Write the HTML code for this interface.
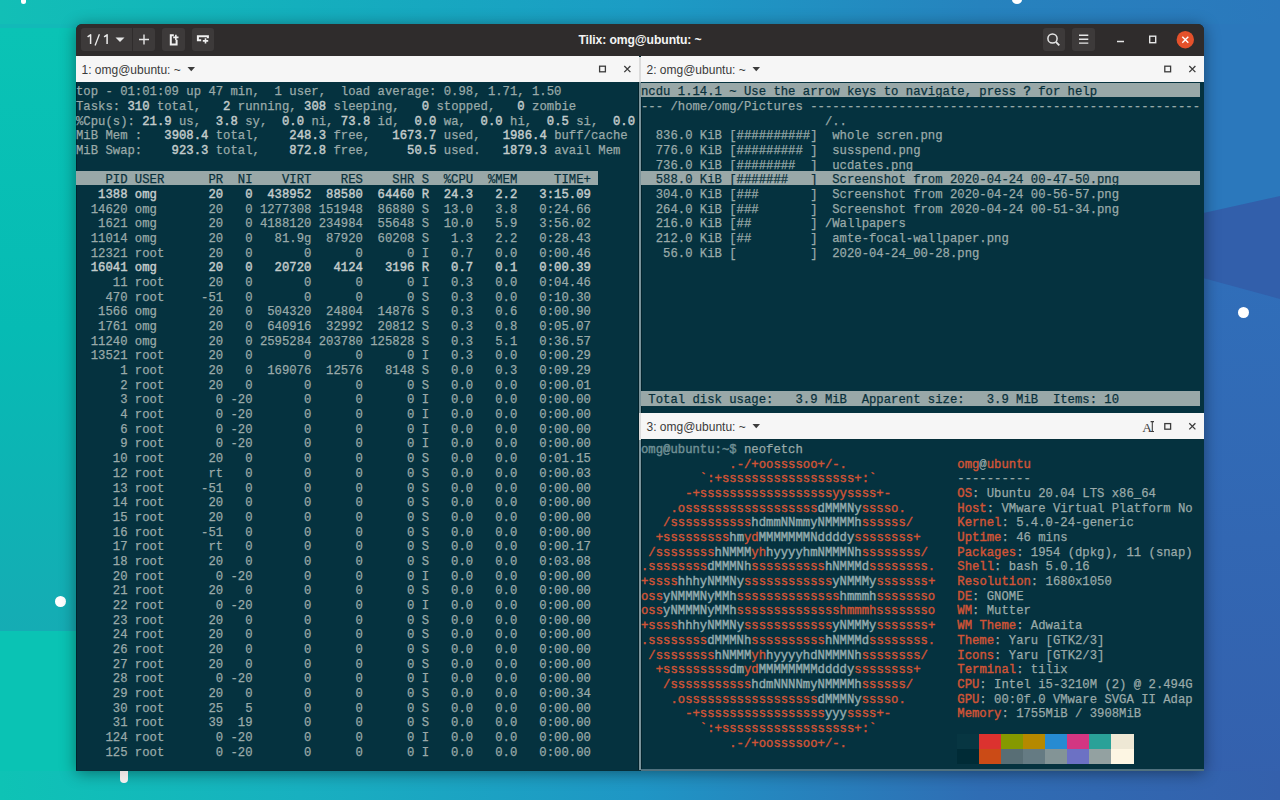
<!DOCTYPE html>
<html><head><meta charset="utf-8">
<style>
html,body{margin:0;padding:0}
body{width:1280px;height:800px;overflow:hidden;position:relative;font-family:"Liberation Sans",sans-serif;
background:linear-gradient(90deg,#0fc2b6 0%,#17b3bb 25%,#1e9fc4 50%,#2a7fc0 80%,#3164b2 100%);}
.abs{position:absolute}

.row{position:absolute;white-space:pre;-webkit-text-stroke:0.25px currentColor;font-family:"Liberation Mono",monospace;font-size:13.0px;transform-origin:0 0;transform:scaleX(0.94281);line-height:14.68px;height:14.68px;color:#9aaaa9}
.bar{position:absolute;background:#99a8a8}
.blk{position:absolute}
.term{position:absolute;background:#05323f}

.win{position:absolute;left:75.5px;top:24px;width:1128.5px;height:747px;border-radius:6px 6px 0 0;overflow:hidden;background:#062f3a;box-shadow:0 2px 16px rgba(0,0,0,.42)}
.hb{position:absolute;left:75.5px;top:24px;width:1128.5px;height:32px;background:#2f2c2c;border-radius:6px 6px 0 0}
.btn{position:absolute;background:#3d3a3a;border-radius:3px}
.tab{position:absolute;background:#f6f6f6;height:26px}
.tabt{position:absolute;font-family:"Liberation Sans",sans-serif;font-size:12px;letter-spacing:0px;color:#3a3a3a;white-space:pre}
.dot{position:absolute;background:#fff;border-radius:50%}
</style></head><body>
<!-- wallpaper facets -->
<svg class="abs" style="left:0;top:0" width="1280" height="800">
  <defs>
    <linearGradient id="gt" x1="0" y1="0" x2="1280" y2="0" gradientUnits="userSpaceOnUse">
      <stop offset="0" stop-color="#12bfb6"/><stop offset="0.234" stop-color="#14afbd"/><stop offset="0.5" stop-color="#1c9cc5"/><stop offset="0.766" stop-color="#2683be"/><stop offset="1" stop-color="#2b78bc"/>
    </linearGradient>
    <linearGradient id="gb" x1="0" y1="0" x2="1280" y2="0" gradientUnits="userSpaceOnUse">
      <stop offset="0" stop-color="#0ec3b5"/><stop offset="0.234" stop-color="#18b0c0"/><stop offset="0.5" stop-color="#1f96c5"/><stop offset="0.766" stop-color="#2f6db4"/><stop offset="1" stop-color="#3460ac"/>
    </linearGradient>
    <linearGradient id="gl" x1="0" y1="28" x2="0" y2="631" gradientUnits="userSpaceOnUse">
      <stop offset="0" stop-color="#0ac3b5"/><stop offset="0.5" stop-color="#06bbb4"/><stop offset="1" stop-color="#15acb4"/>
    </linearGradient>
    <linearGradient id="gr" x1="0" y1="280" x2="0" y2="800" gradientUnits="userSpaceOnUse">
      <stop offset="0" stop-color="#306eb9"/><stop offset="1" stop-color="#3460ad"/>
    </linearGradient>
  </defs>
  <rect x="0" y="0" width="1280" height="400" fill="url(#gt)"/>
  <rect x="0" y="400" width="1280" height="400" fill="url(#gb)"/>
  <rect x="0" y="0" width="200" height="631" fill="url(#gl)"/>
  <rect x="0" y="0" width="200" height="28" fill="#12b9b8"/>
  <rect x="0" y="631" width="200" height="169" fill="#0ac3b4"/>
  <rect x="1100" y="0" width="180" height="260" fill="#2b78bc"/>
  <rect x="1100" y="260" width="180" height="540" fill="url(#gr)"/>
  <polygon points="1100,236 1280,196 1280,299 1100,250" fill="#325fab"/>
  <rect x="0" y="771" width="1280" height="29" fill="url(#gb)"/>
  <rect x="0" y="0" width="1280" height="24" fill="url(#gt)"/>
</svg>
<div class="dot" style="left:54.5px;top:596.2px;width:11px;height:11px"></div>
<div class="dot" style="left:1238.2px;top:306.5px;width:11px;height:11px"></div>
<div class="dot" style="left:1012px;top:-4px;width:10px;height:8px"></div>
<div class="abs" style="left:21px;top:-3px;width:5px;height:7px;background:#fff;border-radius:3px"></div>

<div class="win"></div>
<div class="hb"></div>
<!-- header buttons -->
<div class="btn" style="left:81px;top:28px;width:50.5px;height:23px;border-radius:3px 0 0 3px"></div>
<div class="btn" style="left:132.5px;top:28px;width:22.5px;height:23px;border-radius:0 3px 3px 0"></div>
<div class="btn" style="left:162px;top:28px;width:23px;height:23px"></div>
<div class="btn" style="left:191.5px;top:28px;width:22.5px;height:23px"></div>
<div class="btn" style="left:1043px;top:28px;width:22px;height:23px"></div>
<div class="btn" style="left:1072px;top:28px;width:22.5px;height:23px"></div>

<svg class="abs" style="left:0;top:0" width="1280" height="80">
  <polygon points="115.5,37.5 124.5,37.5 120,42" fill="#e6e6e6"/>
  <path d="M87.6 36.9L90.6 34.8V43.9M104.1 36.9L107.1 34.8V43.9" stroke="#ececec" stroke-width="1.5" fill="none" stroke-linejoin="round"/>
  <path d="M99.4 34.2L95.1 45.6" stroke="#ececec" stroke-width="1.3"/>
  <path d="M139 39.5h10M144 34.5v10" stroke="#e6e6e6" stroke-width="1.4"/>
  <!-- split right icon -->
  <path d="M173.8 35.2H170.8V44.4H176.6V39.8" stroke="#f0f0f0" stroke-width="2" fill="none"/>
  <path d="M173.2 37.4H178.5M175.85 34.8V40" stroke="#f0f0f0" stroke-width="1.6" fill="none"/>
  <!-- split down icon -->
  <path d="M201.2 40.2H197.9V36.2H207.9V38.3" stroke="#f0f0f0" stroke-width="2" fill="none"/>
  <path d="M202.8 40.9H208.2M205.5 38.2V43.6" stroke="#f0f0f0" stroke-width="1.6" fill="none"/>
  <!-- search -->
  <circle cx="1052.5" cy="38.5" r="4.6" stroke="#e6e6e6" stroke-width="1.5" fill="none"/>
  <path d="M1056 42l3.3 3.3" stroke="#e6e6e6" stroke-width="1.8"/>
  <!-- menu -->
  <path d="M1079 35.3h9.3M1079 39.2h9.3M1079 43.1h9.3" stroke="#e6e6e6" stroke-width="1.4"/>
  <!-- min max close -->
  <path d="M1117 41.5h7" stroke="#e6e6e6" stroke-width="1.5"/>
  <rect x="1149.7" y="36.2" width="6" height="6.5" stroke="#e6e6e6" stroke-width="1.4" fill="none"/>
  <circle cx="1185.3" cy="39.7" r="8.7" fill="#e5512b"/>
  <path d="M1182.3 36.7l6 6M1188.3 36.7l-6 6" stroke="#fff" stroke-width="1.4"/>
</svg>
<div class="abs" style="left:578.5px;top:32.5px;font-size:12.2px;font-weight:bold;letter-spacing:-0.1px;color:#f4f4f4;white-space:pre">Tilix: omg@ubuntu: ~</div>

<!-- terminals -->
<div class="term" style="left:75.5px;top:82px;width:563.5px;height:688px"></div>
<div class="term" style="left:640.75px;top:82px;width:563.25px;height:331px"></div>
<div class="term" style="left:640.75px;top:439.5px;width:563.25px;height:330.5px"></div>
<div class="abs" style="left:638px;top:82px;width:1px;height:688px;background:#01222b"></div><div class="abs" style="left:639px;top:82px;width:2.25px;height:688px;background:#7b949b"></div><div class="abs" style="left:639px;top:56.5px;width:2px;height:25.5px;background:#dcdcdc"></div><div class="abs" style="left:639px;top:413px;width:2px;height:26.5px;background:#dcdcdc"></div><div class="abs" style="left:641.25px;top:82px;width:0.75px;height:688px;background:#01222b"></div>

<!-- tab bars -->
<div class="tab" style="left:75.5px;top:56px;width:563.5px"></div>
<div class="tab" style="left:640.75px;top:56px;width:563.25px"></div>
<div class="tab" style="left:640.75px;top:413px;width:563.25px"></div>
<div class="tabt" style="left:81.5px;top:62.8px">1: omg@ubuntu: ~</div>
<div class="tabt" style="left:646.5px;top:62.8px">2: omg@ubuntu: ~</div>
<div class="tabt" style="left:646.5px;top:419.8px">3: omg@ubuntu: ~</div>
<svg class="abs" style="left:0;top:0" width="1280" height="800">
  <polygon points="187.5,67 195,67 191.25,71.3" fill="#3c3c3c"/>
  <polygon points="752.5,67 760,67 756.25,71.3" fill="#3c3c3c"/>
  <polygon points="752.5,424 760,424 756.25,428.3" fill="#3c3c3c"/>
  <rect x="599.6" y="66.2" width="5.8" height="5.6" stroke="#3c3c3c" stroke-width="1.3" fill="none"/>
  <path d="M624.3 66l6.1 6.1M630.4 66l-6.1 6.1" stroke="#3c3c3c" stroke-width="1.3"/>
  <rect x="1164.8" y="66.2" width="5.8" height="5.6" stroke="#3c3c3c" stroke-width="1.3" fill="none"/>
  <path d="M1189.3 66l6.1 6.1M1195.4 66l-6.1 6.1" stroke="#3c3c3c" stroke-width="1.3"/>
  <rect x="1164.8" y="423.6" width="5.8" height="5.6" stroke="#3c3c3c" stroke-width="1.3" fill="none"/>
  <path d="M1189.3 423.3l6.1 6.1M1195.4 423.3l-6.1 6.1" stroke="#3c3c3c" stroke-width="1.3"/>
</svg>
<div class="abs" style="left:1142.3px;top:419.5px;font-family:'Liberation Serif',serif;font-size:13.5px;color:#3c3c3c;letter-spacing:0">A</div>
<svg class="abs" style="left:0;top:0" width="1280" height="800">
  <path d="M1150.6 421.6h3.4M1152.3 421.6v9.9M1150.6 431.5h3.4" stroke="#3c3c3c" stroke-width="1.1" fill="none"/>
</svg>

<div class="abs" style="left:75.5px;top:82px;width:1.2px;height:688px;background:#01242d"></div>
<div class="abs" style="left:641px;top:769.2px;width:563px;height:1.6px;background:#50717e"></div>
<div class="bar" style="left:75.60px;top:170.73px;width:522.21px;height:14.68px"></div>
<div class="bar" style="left:640.75px;top:82.65px;width:558.98px;height:14.68px"></div>
<div class="bar" style="left:640.75px;top:170.73px;width:558.98px;height:14.68px"></div>
<div class="bar" style="left:640.75px;top:390.93px;width:558.98px;height:14.68px"></div>
<div class="blk" style="left:957.02px;top:734.10px;width:22.37px;height:14.98px;background:#073642"></div>
<div class="blk" style="left:979.08px;top:734.10px;width:22.37px;height:14.98px;background:#dc322f"></div>
<div class="blk" style="left:1001.14px;top:734.10px;width:22.37px;height:14.98px;background:#859900"></div>
<div class="blk" style="left:1023.21px;top:734.10px;width:22.37px;height:14.98px;background:#b58900"></div>
<div class="blk" style="left:1045.28px;top:734.10px;width:22.37px;height:14.98px;background:#268bd2"></div>
<div class="blk" style="left:1067.34px;top:734.10px;width:22.37px;height:14.98px;background:#d33682"></div>
<div class="blk" style="left:1089.40px;top:734.10px;width:22.37px;height:14.98px;background:#2aa198"></div>
<div class="blk" style="left:1111.47px;top:734.10px;width:22.37px;height:14.98px;background:#eee8d5"></div>
<div class="blk" style="left:957.02px;top:748.78px;width:22.37px;height:14.98px;background:#002b36"></div>
<div class="blk" style="left:979.08px;top:748.78px;width:22.37px;height:14.98px;background:#cb4b16"></div>
<div class="blk" style="left:1001.14px;top:748.78px;width:22.37px;height:14.98px;background:#586e75"></div>
<div class="blk" style="left:1023.21px;top:748.78px;width:22.37px;height:14.98px;background:#657b83"></div>
<div class="blk" style="left:1045.28px;top:748.78px;width:22.37px;height:14.98px;background:#839496"></div>
<div class="blk" style="left:1067.34px;top:748.78px;width:22.37px;height:14.98px;background:#6c71c4"></div>
<div class="blk" style="left:1089.40px;top:748.78px;width:22.37px;height:14.98px;background:#93a1a1"></div>
<div class="blk" style="left:1111.47px;top:748.78px;width:22.37px;height:14.98px;background:#fdf6e3"></div>
<div class="row" style="left:75.60px;top:85.15px">top - 01:01:09 up 47 min,  1 user,  load average: 0.98, 1.71, 1.50</div>
<div class="row" style="left:75.60px;top:99.83px">Tasks: <span style="color:#c3cccc;-webkit-text-stroke:0.45px currentColor">310</span> total,   <span style="color:#c3cccc;-webkit-text-stroke:0.45px currentColor">2</span> running, <span style="color:#c3cccc;-webkit-text-stroke:0.45px currentColor">308</span> sleeping,   <span style="color:#c3cccc;-webkit-text-stroke:0.45px currentColor">0</span> stopped,   <span style="color:#c3cccc;-webkit-text-stroke:0.45px currentColor">0</span> zombie</div>
<div class="row" style="left:75.60px;top:114.51px">%Cpu(s): <span style="color:#c3cccc;-webkit-text-stroke:0.45px currentColor">21.9</span> us,  <span style="color:#c3cccc;-webkit-text-stroke:0.45px currentColor">3.8</span> sy,  <span style="color:#c3cccc;-webkit-text-stroke:0.45px currentColor">0.0</span> ni, <span style="color:#c3cccc;-webkit-text-stroke:0.45px currentColor">73.8</span> id,  <span style="color:#c3cccc;-webkit-text-stroke:0.45px currentColor">0.0</span> wa,  <span style="color:#c3cccc;-webkit-text-stroke:0.45px currentColor">0.0</span> hi,  <span style="color:#c3cccc;-webkit-text-stroke:0.45px currentColor">0.5</span> si,  <span style="color:#c3cccc;-webkit-text-stroke:0.45px currentColor">0.0</span></div>
<div class="row" style="left:75.60px;top:129.19px">MiB Mem :   <span style="color:#c3cccc;-webkit-text-stroke:0.45px currentColor">3908.4</span> total,    <span style="color:#c3cccc;-webkit-text-stroke:0.45px currentColor">248.3</span> free,   <span style="color:#c3cccc;-webkit-text-stroke:0.45px currentColor">1673.7</span> used,   <span style="color:#c3cccc;-webkit-text-stroke:0.45px currentColor">1986.4</span> buff/cache</div>
<div class="row" style="left:75.60px;top:143.87px">MiB Swap:    <span style="color:#c3cccc;-webkit-text-stroke:0.45px currentColor">923.3</span> total,    <span style="color:#c3cccc;-webkit-text-stroke:0.45px currentColor">872.8</span> free,     <span style="color:#c3cccc;-webkit-text-stroke:0.45px currentColor">50.5</span> used.   <span style="color:#c3cccc;-webkit-text-stroke:0.45px currentColor">1879.3</span> avail Mem</div>
<div class="row" style="left:75.60px;top:173.23px"><span style="color:#08303b">    PID USER      PR  NI    VIRT    RES    SHR S  %CPU  %MEM     TIME+ </span></div>
<div class="row" style="left:75.60px;top:187.91px"><span style="color:#c3cccc;-webkit-text-stroke:0.45px currentColor">   1388 omg       20   0  438952  88580  64460 R  24.3   2.2   3:15.09</span></div>
<div class="row" style="left:75.60px;top:202.59px">  14620 omg       20   0 1277308 151948  86880 S  13.0   3.8   0:24.66</div>
<div class="row" style="left:75.60px;top:217.27px">   1621 omg       20   0 4188120 234984  55648 S  10.0   5.9   3:56.02</div>
<div class="row" style="left:75.60px;top:231.95px">  11014 omg       20   0   81.9g  87920  60208 S   1.3   2.2   0:28.43</div>
<div class="row" style="left:75.60px;top:246.63px">  12321 root      20   0       0      0      0 I   0.7   0.0   0:00.46</div>
<div class="row" style="left:75.60px;top:261.31px"><span style="color:#c3cccc;-webkit-text-stroke:0.45px currentColor">  16041 omg       20   0   20720   4124   3196 R   0.7   0.1   0:00.39</span></div>
<div class="row" style="left:75.60px;top:275.99px">     11 root      20   0       0      0      0 I   0.3   0.0   0:04.46</div>
<div class="row" style="left:75.60px;top:290.67px">    470 root     -51   0       0      0      0 S   0.3   0.0   0:10.30</div>
<div class="row" style="left:75.60px;top:305.35px">   1566 omg       20   0  504320  24804  14876 S   0.3   0.6   0:00.90</div>
<div class="row" style="left:75.60px;top:320.03px">   1761 omg       20   0  640916  32992  20812 S   0.3   0.8   0:05.07</div>
<div class="row" style="left:75.60px;top:334.71px">  11240 omg       20   0 2595284 203780 125828 S   0.3   5.1   0:36.57</div>
<div class="row" style="left:75.60px;top:349.39px">  13521 root      20   0       0      0      0 I   0.3   0.0   0:00.29</div>
<div class="row" style="left:75.60px;top:364.07px">      1 root      20   0  169076  12576   8148 S   0.0   0.3   0:09.29</div>
<div class="row" style="left:75.60px;top:378.75px">      2 root      20   0       0      0      0 S   0.0   0.0   0:00.01</div>
<div class="row" style="left:75.60px;top:393.43px">      3 root       0 -20       0      0      0 I   0.0   0.0   0:00.00</div>
<div class="row" style="left:75.60px;top:408.11px">      4 root       0 -20       0      0      0 I   0.0   0.0   0:00.00</div>
<div class="row" style="left:75.60px;top:422.79px">      6 root       0 -20       0      0      0 I   0.0   0.0   0:00.00</div>
<div class="row" style="left:75.60px;top:437.47px">      9 root       0 -20       0      0      0 I   0.0   0.0   0:00.00</div>
<div class="row" style="left:75.60px;top:452.15px">     10 root      20   0       0      0      0 S   0.0   0.0   0:01.15</div>
<div class="row" style="left:75.60px;top:466.83px">     12 root      rt   0       0      0      0 S   0.0   0.0   0:00.03</div>
<div class="row" style="left:75.60px;top:481.51px">     13 root     -51   0       0      0      0 S   0.0   0.0   0:00.00</div>
<div class="row" style="left:75.60px;top:496.19px">     14 root      20   0       0      0      0 S   0.0   0.0   0:00.00</div>
<div class="row" style="left:75.60px;top:510.87px">     15 root      20   0       0      0      0 S   0.0   0.0   0:00.00</div>
<div class="row" style="left:75.60px;top:525.55px">     16 root     -51   0       0      0      0 S   0.0   0.0   0:00.00</div>
<div class="row" style="left:75.60px;top:540.23px">     17 root      rt   0       0      0      0 S   0.0   0.0   0:00.17</div>
<div class="row" style="left:75.60px;top:554.91px">     18 root      20   0       0      0      0 S   0.0   0.0   0:03.08</div>
<div class="row" style="left:75.60px;top:569.59px">     20 root       0 -20       0      0      0 I   0.0   0.0   0:00.00</div>
<div class="row" style="left:75.60px;top:584.27px">     21 root      20   0       0      0      0 S   0.0   0.0   0:00.00</div>
<div class="row" style="left:75.60px;top:598.95px">     22 root       0 -20       0      0      0 I   0.0   0.0   0:00.00</div>
<div class="row" style="left:75.60px;top:613.63px">     23 root      20   0       0      0      0 S   0.0   0.0   0:00.00</div>
<div class="row" style="left:75.60px;top:628.31px">     24 root      20   0       0      0      0 S   0.0   0.0   0:00.00</div>
<div class="row" style="left:75.60px;top:642.99px">     26 root      20   0       0      0      0 S   0.0   0.0   0:00.00</div>
<div class="row" style="left:75.60px;top:657.67px">     27 root      20   0       0      0      0 S   0.0   0.0   0:00.00</div>
<div class="row" style="left:75.60px;top:672.35px">     28 root       0 -20       0      0      0 I   0.0   0.0   0:00.00</div>
<div class="row" style="left:75.60px;top:687.03px">     29 root      20   0       0      0      0 S   0.0   0.0   0:00.34</div>
<div class="row" style="left:75.60px;top:701.71px">     30 root      25   5       0      0      0 S   0.0   0.0   0:00.00</div>
<div class="row" style="left:75.60px;top:716.39px">     31 root      39  19       0      0      0 S   0.0   0.0   0:00.00</div>
<div class="row" style="left:75.60px;top:731.07px">    124 root       0 -20       0      0      0 I   0.0   0.0   0:00.00</div>
<div class="row" style="left:75.60px;top:745.75px">    125 root       0 -20       0      0      0 I   0.0   0.0   0:00.00</div>
<div class="row" style="left:640.75px;top:85.15px"><span style="color:#08303b">ncdu 1.14.1 ~ Use the arrow keys to navigate, press </span><span style="color:#08303b;-webkit-text-stroke:0.45px currentColor">?</span><span style="color:#08303b"> for help</span></div>
<div class="row" style="left:640.75px;top:99.83px">--- /home/omg/Pictures -----------------------------------------------------</div>
<div class="row" style="left:640.75px;top:114.51px">                         /..</div>
<div class="row" style="left:640.75px;top:129.19px">  836.0 KiB [##########]  whole scren.png</div>
<div class="row" style="left:640.75px;top:143.87px">  776.0 KiB [######### ]  susspend.png</div>
<div class="row" style="left:640.75px;top:158.55px">  736.0 KiB [########  ]  ucdates.png</div>
<div class="row" style="left:640.75px;top:173.23px"><span style="color:#08303b">  588.0 KiB [#######   ]  Screenshot from 2020-04-24 00-47-50.png</span></div>
<div class="row" style="left:640.75px;top:187.91px">  304.0 KiB [###       ]  Screenshot from 2020-04-24 00-56-57.png</div>
<div class="row" style="left:640.75px;top:202.59px">  264.0 KiB [###       ]  Screenshot from 2020-04-24 00-51-34.png</div>
<div class="row" style="left:640.75px;top:217.27px">  216.0 KiB [##        ] /Wallpapers</div>
<div class="row" style="left:640.75px;top:231.95px">  212.0 KiB [##        ]  amte-focal-wallpaper.png</div>
<div class="row" style="left:640.75px;top:246.63px">   56.0 KiB [          ]  2020-04-24_00-28.png</div>
<div class="row" style="left:640.75px;top:393.43px"><span style="color:#08303b"> Total disk usage:   3.9 MiB  Apparent size:   3.9 MiB  Items: 10</span></div>
<div class="row" style="left:640.75px;top:443.00px"><span style="color:#6f8f94;-webkit-text-stroke:0.45px currentColor">omg@ubuntu:~$</span> neofetch</div>
<div class="row" style="left:640.75px;top:457.68px"><span style="color:#cf5436;-webkit-text-stroke:0.45px currentColor">            </span><span style="color:#cf5436;-webkit-text-stroke:0.45px currentColor">.-/+oossssoo+/-.</span>               <span style="color:#cf5436;-webkit-text-stroke:0.45px currentColor">omg</span><span style="color:#9aaaa9">@</span><span style="color:#cf5436;-webkit-text-stroke:0.45px currentColor">ubuntu</span></div>
<div class="row" style="left:640.75px;top:472.36px"><span style="color:#cf5436;-webkit-text-stroke:0.45px currentColor">        `:+ssssssssssssssssss+:`</span>           <span style="color:#9aaaa9">----------</span></div>
<div class="row" style="left:640.75px;top:487.04px"><span style="color:#cf5436;-webkit-text-stroke:0.45px currentColor">      -+ssssssssssssssssssyyssss+-</span>         <span style="color:#cf5436;-webkit-text-stroke:0.45px currentColor">OS</span><span style="color:#9aaaa9">: Ubuntu 20.04 LTS x86_64</span></div>
<div class="row" style="left:640.75px;top:501.72px"><span style="color:#cf5436;-webkit-text-stroke:0.45px currentColor">    .ossssssssssssssssss</span><span style="color:#93abae;-webkit-text-stroke:0.45px currentColor">dMMMNy</span><span style="color:#cf5436;-webkit-text-stroke:0.45px currentColor">sssso.</span>       <span style="color:#cf5436;-webkit-text-stroke:0.45px currentColor">Host</span><span style="color:#9aaaa9">: VMware Virtual Platform No</span></div>
<div class="row" style="left:640.75px;top:516.40px"><span style="color:#cf5436;-webkit-text-stroke:0.45px currentColor">   /sssssssssss</span><span style="color:#93abae;-webkit-text-stroke:0.45px currentColor">hdmmNNmmyNMMMMh</span><span style="color:#cf5436;-webkit-text-stroke:0.45px currentColor">ssssss/</span>      <span style="color:#cf5436;-webkit-text-stroke:0.45px currentColor">Kernel</span><span style="color:#9aaaa9">: 5.4.0-24-generic</span></div>
<div class="row" style="left:640.75px;top:531.08px"><span style="color:#cf5436;-webkit-text-stroke:0.45px currentColor">  +sssssssss</span><span style="color:#93abae;-webkit-text-stroke:0.45px currentColor">hm</span><span style="color:#cf5436;-webkit-text-stroke:0.45px currentColor">yd</span><span style="color:#93abae;-webkit-text-stroke:0.45px currentColor">MMMMMMMNddddy</span><span style="color:#cf5436;-webkit-text-stroke:0.45px currentColor">ssssssss+</span>     <span style="color:#cf5436;-webkit-text-stroke:0.45px currentColor">Uptime</span><span style="color:#9aaaa9">: 46 mins</span></div>
<div class="row" style="left:640.75px;top:545.76px"><span style="color:#cf5436;-webkit-text-stroke:0.45px currentColor"> /ssssssss</span><span style="color:#93abae;-webkit-text-stroke:0.45px currentColor">hNMMM</span><span style="color:#cf5436;-webkit-text-stroke:0.45px currentColor">yh</span><span style="color:#93abae;-webkit-text-stroke:0.45px currentColor">hyyyyhmNMMMNh</span><span style="color:#cf5436;-webkit-text-stroke:0.45px currentColor">ssssssss/</span>    <span style="color:#cf5436;-webkit-text-stroke:0.45px currentColor">Packages</span><span style="color:#9aaaa9">: 1954 (dpkg), 11 (snap)</span></div>
<div class="row" style="left:640.75px;top:560.44px"><span style="color:#cf5436;-webkit-text-stroke:0.45px currentColor">.ssssssss</span><span style="color:#93abae;-webkit-text-stroke:0.45px currentColor">dMMMNh</span><span style="color:#cf5436;-webkit-text-stroke:0.45px currentColor">ssssssssss</span><span style="color:#93abae;-webkit-text-stroke:0.45px currentColor">hNMMMd</span><span style="color:#cf5436;-webkit-text-stroke:0.45px currentColor">ssssssss.</span>   <span style="color:#cf5436;-webkit-text-stroke:0.45px currentColor">Shell</span><span style="color:#9aaaa9">: bash 5.0.16</span></div>
<div class="row" style="left:640.75px;top:575.12px"><span style="color:#cf5436;-webkit-text-stroke:0.45px currentColor">+ssss</span><span style="color:#93abae;-webkit-text-stroke:0.45px currentColor">hhhyNMMNy</span><span style="color:#cf5436;-webkit-text-stroke:0.45px currentColor">ssssssssssss</span><span style="color:#93abae;-webkit-text-stroke:0.45px currentColor">yNMMMy</span><span style="color:#cf5436;-webkit-text-stroke:0.45px currentColor">sssssss+</span>   <span style="color:#cf5436;-webkit-text-stroke:0.45px currentColor">Resolution</span><span style="color:#9aaaa9">: 1680x1050</span></div>
<div class="row" style="left:640.75px;top:589.80px"><span style="color:#cf5436;-webkit-text-stroke:0.45px currentColor">oss</span><span style="color:#93abae;-webkit-text-stroke:0.45px currentColor">yNMMMNyMMh</span><span style="color:#cf5436;-webkit-text-stroke:0.45px currentColor">ssssssssssssss</span><span style="color:#93abae;-webkit-text-stroke:0.45px currentColor">hmmmh</span><span style="color:#cf5436;-webkit-text-stroke:0.45px currentColor">ssssssso</span>   <span style="color:#cf5436;-webkit-text-stroke:0.45px currentColor">DE</span><span style="color:#9aaaa9">: GNOME</span></div>
<div class="row" style="left:640.75px;top:604.48px"><span style="color:#cf5436;-webkit-text-stroke:0.45px currentColor">oss</span><span style="color:#93abae;-webkit-text-stroke:0.45px currentColor">yNMMMNyMMh</span><span style="color:#cf5436;-webkit-text-stroke:0.45px currentColor">sssssssssssssshmmmhssssssso</span>   <span style="color:#cf5436;-webkit-text-stroke:0.45px currentColor">WM</span><span style="color:#9aaaa9">: Mutter</span></div>
<div class="row" style="left:640.75px;top:619.16px"><span style="color:#cf5436;-webkit-text-stroke:0.45px currentColor">+ssss</span><span style="color:#93abae;-webkit-text-stroke:0.45px currentColor">hhhyNMMNy</span><span style="color:#cf5436;-webkit-text-stroke:0.45px currentColor">ssssssssssss</span><span style="color:#93abae;-webkit-text-stroke:0.45px currentColor">yNMMMy</span><span style="color:#cf5436;-webkit-text-stroke:0.45px currentColor">sssssss+</span>   <span style="color:#cf5436;-webkit-text-stroke:0.45px currentColor">WM Theme</span><span style="color:#9aaaa9">: Adwaita</span></div>
<div class="row" style="left:640.75px;top:633.84px"><span style="color:#cf5436;-webkit-text-stroke:0.45px currentColor">.ssssssss</span><span style="color:#93abae;-webkit-text-stroke:0.45px currentColor">dMMMNh</span><span style="color:#cf5436;-webkit-text-stroke:0.45px currentColor">ssssssssss</span><span style="color:#93abae;-webkit-text-stroke:0.45px currentColor">hNMMMd</span><span style="color:#cf5436;-webkit-text-stroke:0.45px currentColor">ssssssss.</span>   <span style="color:#cf5436;-webkit-text-stroke:0.45px currentColor">Theme</span><span style="color:#9aaaa9">: Yaru [GTK2/3]</span></div>
<div class="row" style="left:640.75px;top:648.52px"><span style="color:#cf5436;-webkit-text-stroke:0.45px currentColor"> /ssssssss</span><span style="color:#93abae;-webkit-text-stroke:0.45px currentColor">hNMMM</span><span style="color:#cf5436;-webkit-text-stroke:0.45px currentColor">yh</span><span style="color:#93abae;-webkit-text-stroke:0.45px currentColor">hyyyyhdNMMMNh</span><span style="color:#cf5436;-webkit-text-stroke:0.45px currentColor">ssssssss/</span>    <span style="color:#cf5436;-webkit-text-stroke:0.45px currentColor">Icons</span><span style="color:#9aaaa9">: Yaru [GTK2/3]</span></div>
<div class="row" style="left:640.75px;top:663.20px"><span style="color:#cf5436;-webkit-text-stroke:0.45px currentColor">  +sssssssss</span><span style="color:#93abae;-webkit-text-stroke:0.45px currentColor">dm</span><span style="color:#cf5436;-webkit-text-stroke:0.45px currentColor">yd</span><span style="color:#93abae;-webkit-text-stroke:0.45px currentColor">MMMMMMMMddddy</span><span style="color:#cf5436;-webkit-text-stroke:0.45px currentColor">ssssssss+</span>     <span style="color:#cf5436;-webkit-text-stroke:0.45px currentColor">Terminal</span><span style="color:#9aaaa9">: tilix</span></div>
<div class="row" style="left:640.75px;top:677.88px"><span style="color:#cf5436;-webkit-text-stroke:0.45px currentColor">   /sssssssssss</span><span style="color:#93abae;-webkit-text-stroke:0.45px currentColor">hdmNNNNmyNMMMMh</span><span style="color:#cf5436;-webkit-text-stroke:0.45px currentColor">ssssss/</span>      <span style="color:#cf5436;-webkit-text-stroke:0.45px currentColor">CPU</span><span style="color:#9aaaa9">: Intel i5-3210M (2) @ 2.494G</span></div>
<div class="row" style="left:640.75px;top:692.56px"><span style="color:#cf5436;-webkit-text-stroke:0.45px currentColor">    .ossssssssssssssssss</span><span style="color:#93abae;-webkit-text-stroke:0.45px currentColor">dMMMNy</span><span style="color:#cf5436;-webkit-text-stroke:0.45px currentColor">sssso.</span>       <span style="color:#cf5436;-webkit-text-stroke:0.45px currentColor">GPU</span><span style="color:#9aaaa9">: 00:0f.0 VMware SVGA II Adap</span></div>
<div class="row" style="left:640.75px;top:707.24px"><span style="color:#cf5436;-webkit-text-stroke:0.45px currentColor">      -+sssssssssssssssss</span><span style="color:#93abae;-webkit-text-stroke:0.45px currentColor">yyy</span><span style="color:#cf5436;-webkit-text-stroke:0.45px currentColor">ssss+-</span>         <span style="color:#cf5436;-webkit-text-stroke:0.45px currentColor">Memory</span><span style="color:#9aaaa9">: 1755MiB / 3908MiB</span></div>
<div class="row" style="left:640.75px;top:721.92px"><span style="color:#cf5436;-webkit-text-stroke:0.45px currentColor">        `:+ssssssssssssssssss+:`</span></div>
<div class="row" style="left:640.75px;top:736.60px"><span style="color:#cf5436;-webkit-text-stroke:0.45px currentColor">            .-/+oossssoo+/-.</span></div>
<div class="abs" style="left:120px;top:770.5px;width:8px;height:12px;background:linear-gradient(#e6dcdc,#f4f0f0);border-radius:0 0 4px 4px"></div>

</body></html>
